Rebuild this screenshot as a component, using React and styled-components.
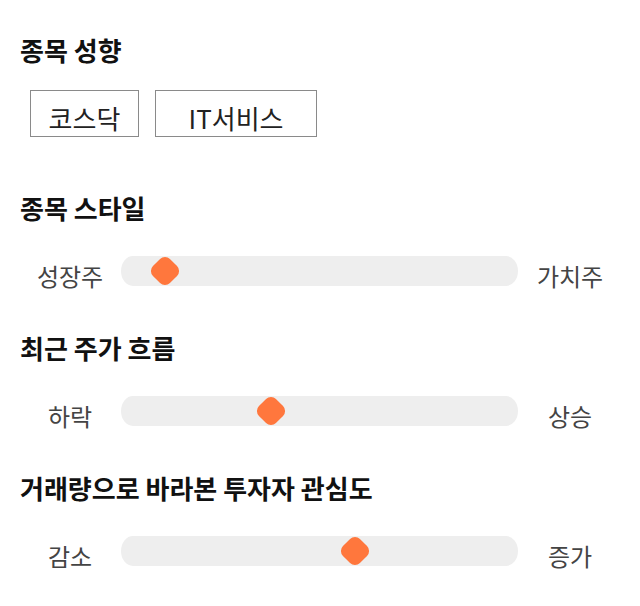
import React from "react";
import styled, { createGlobalStyle } from "styled-components";

const Global = createGlobalStyle`
  html, body { margin: 0; padding: 0; background: #fff; }
  body { font-family: "Noto Sans CJK KR", "Noto Sans", sans-serif; }
`;

const Page = styled.div`
  width: 600px;
  padding: 32px 20px 0 20px;
  display: flex;
  flex-direction: column;
`;

const Section = styled.section`
  display: flex;
  flex-direction: column;
  margin-bottom: ${(p) => p.$mb || 0}px;
`;

const Title = styled.h2`
  margin: 0;
  font-size: 26px;
  line-height: 36px;
  font-weight: 700;
  color: #111;
`;

const ChipRow = styled.div`
  display: flex;
  gap: 16px;
  margin: 22px 0 0 10px;
`;

const Chip = styled.div`
  width: ${(p) => p.$w}px;
  height: 47px;
  box-sizing: border-box;
  border: 1px solid #8a8a8a;
  padding-top: 8px;
  display: flex;
  align-items: center;
  justify-content: center;
  font-size: 26px;
  color: #222;
`;

const SliderRow = styled.div`
  display: grid;
  grid-template-columns: 100px 1fr 100px;
  align-items: center;
  margin-top: 22px;
`;

const Label = styled.span`
  text-align: center;
  font-size: 24px;
  line-height: 36px;
  padding-top: 10px;
  color: #444;
`;

const Track = styled.div`
  position: relative;
  height: 30px;
  margin: 0 2px 0 1px;
  background: #eeeeee;
  border-radius: 12px / 15px;
`;

const Thumb = styled.div`
  position: absolute;
  top: 50%;
  width: 24px;
  height: 24px;
  background: #ff773d;
  border-radius: 7px;
  transform: translate(-50%, -50%) rotate(45deg);
`;

const chips = [
  { text: "코스닥", w: 109 },
  { text: "IT서비스", w: 162 },
];

const sliders = [
  { title: "종목 스타일", left: "성장주", right: "가치주", pos: 0.111 },
  { title: "최근 주가 흐름", left: "하락", right: "상승", pos: 0.378 },
  { title: "거래량으로 바라본 투자자 관심도", left: "감소", right: "증가", pos: 0.59 },
];

export default function App() {
  return (
    <Page>
      <Global />
      <Section $mb={53}>
        <Title>종목 성향</Title>
        <ChipRow>
          {chips.map((c) => (
            <Chip key={c.text} $w={c.w}>{c.text}</Chip>
          ))}
        </ChipRow>
      </Section>
      {sliders.map((s) => (
        <Section key={s.title} $mb={36}>
          <Title>{s.title}</Title>
          <SliderRow>
            <Label>{s.left}</Label>
            <Track>
              <Thumb style={{ left: `${s.pos * 100}%` }} />
            </Track>
            <Label>{s.right}</Label>
          </SliderRow>
        </Section>
      ))}
    </Page>
  );
}
